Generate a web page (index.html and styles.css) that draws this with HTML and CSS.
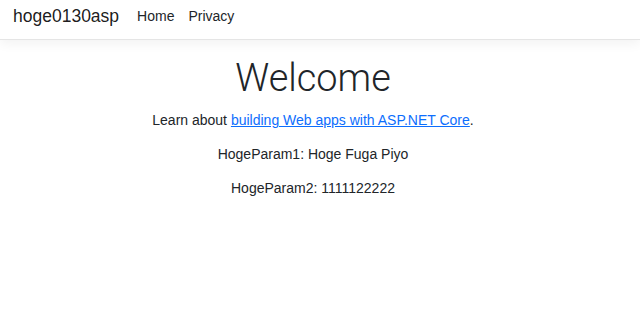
FILE: index.html
```html
<!DOCTYPE html>
<html lang="en">

<head>
  <meta charset="UTF-8">
  <meta name="viewport" content="width=device-width, initial-scale=1.0">
  <title>Home Page - hoge0130asp</title>
  <link rel="stylesheet" href="styles.css">
</head>

<body>
  <header>
    <nav class="navbar">
      <a class="navbar-brand" href="#">hoge0130asp</a>
      <ul class="navbar-nav">
        <li><a class="nav-link" href="#">Home</a></li>
        <li><a class="nav-link" href="#">Privacy</a></li>
      </ul>
    </nav>
  </header>
  <div class="page">
    <div class="container">
      <main class="text-center">
        <h1 class="display-4">Welcome</h1>
        <p>Learn about <a href="#">building Web apps with ASP.NET Core</a>.</p>
        <p>HogeParam1: Hoge Fuga Piyo</p>
        <p>HogeParam2: 1111122222</p>
      </main>
    </div>
  </div>
</body>
</html>
```

FILE: styles.css
```css
* {
  margin: 0;
  padding: 0;
  box-sizing: border-box;
}
html {
  font-size: 14px;
}
body {
  font-family: "Liberation Sans", Arial, sans-serif;
  line-height: 1.5;
  color: #212529;
  background-color: #fff;
}
.navbar {
  display: flex;
  align-items: center;
  height: 40px;
  padding: 0 13px 6px;
  border-bottom: 1px solid #e5e5e5;
  box-shadow: 0 .25rem .75rem rgba(0,0,0,.05);
  margin-bottom: 16px;
}
.navbar-brand {
  font-size: 17.5px;
  color: rgba(0,0,0,.9);
  text-decoration: none;
  margin-right: 11px;
}
.navbar-nav {
  display: flex;
  list-style: none;
}
.nav-link {
  display: block;
  padding: 0 7px;
  color: #212529;
  text-decoration: none;
}
/* content sits a bit left of the window centre, as in a page with a scrollbar */
.page {
  padding-right: 14px;
}
.container {
  max-width: 540px;
  margin: 0 auto;
  padding: 0 12px;
}
.text-center {
  text-align: center;
}
.display-4 {
  font-family: Roboto, "Liberation Sans", sans-serif;
  font-size: 37.9px;
  font-weight: 300;
  line-height: 1.2;
  margin-bottom: 9px;
}
p {
  margin-bottom: 13px;
}
main a {
  color: #0d6efd;
}
```
